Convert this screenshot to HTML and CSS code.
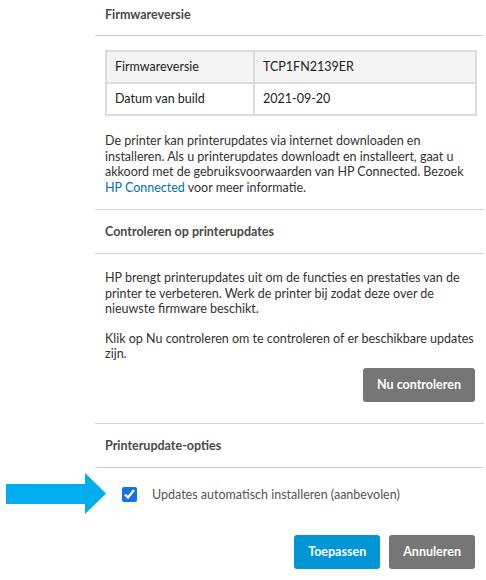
FILE: index.html
```html
<!DOCTYPE html>
<html lang="nl">
<head>
  <meta charset="UTF-8" />
  <meta name="viewport" content="width=device-width, initial-scale=1.0"/>
  <title>Printerupdates</title>
  <link rel="stylesheet" href="styles.css">
</head>
<body>

  <div class="panel">

    <section class="section">
      <h2 class="section-title first">Firmwareversie</h2>
      <div class="section-body">
        <table class="info-table">
          <tr class="shaded">
            <td class="label-cell">Firmwareversie</td>
            <td>TCP1FN2139ER</td>
          </tr>
          <tr>
            <td class="label-cell">Datum van build</td>
            <td>2021-09-20</td>
          </tr>
        </table>
        <p class="text intro">
          De printer kan printerupdates via internet downloaden en installeren. Als u printerupdates downloadt en installeert, gaat u akkoord met de gebruiksvoorwaarden van HP Connected. Bezoek
          <a href="#" class="link">HP Connected</a> voor meer informatie.
        </p>
      </div>
    </section>

    <section class="section">
      <h2 class="section-title">Controleren op printerupdates</h2>
      <div class="section-body">
        <p class="text first-text">
          HP brengt printerupdates uit om de functies en prestaties van de printer te verbeteren. Werk de printer bij zodat deze over de nieuwste firmware beschikt.
        </p>
        <p class="text next-text">
          Klik op Nu controleren om te controleren of er beschikbare updates zijn.
        </p>
        <div class="actions check-actions">
          <button type="button" class="btn btn-gray">Nu controleren</button>
        </div>
      </div>
    </section>

    <section class="section">
      <h2 class="section-title">Printerupdate-opties</h2>
      <div class="section-body">
        <label class="check-row">
          <svg class="pointer" width="100" height="41" viewBox="0 0 100 41">
            <polygon points="0,11 79,11 79,0 100,20.5 79,41 79,31 0,31" fill="#00aeef"/>
          </svg>
          <input type="checkbox" class="check" checked />
          <span>Updates automatisch installeren (aanbevolen)</span>
        </label>
        <div class="actions final-actions">
          <button type="button" class="btn btn-blue">Toepassen</button>
          <button type="button" class="btn btn-gray">Annuleren</button>
        </div>
      </div>
    </section>

  </div>

</body>
</html>
```

FILE: styles.css
```css
body {
  margin: 0;
  background: #fff;
  font-family: Lato, "Noto Sans", sans-serif;
  font-size: 12.5px;
  color: #333;
}
.panel {
  margin-left: 95px;
  width: 389px;
}
.section + .section {
  border-top: 1px solid #d4d4d4;
}
.section-title {
  margin: 0;
  padding: 13px 10px 12px;
  font-size: 12.5px;
  line-height: 18px;
  font-weight: 700;
  color: #4a4a4a;
  border-bottom: 1px solid #d4d4d4;
}
.section-title.first {
  padding-top: 6px;
  padding-bottom: 11px;
}
.section-body {
  padding: 0 9px 0 10px;
}
.info-table {
  margin-top: 14px;
  width: 372px;
  border-collapse: collapse;
  border: 2px solid #dcdcdc;
}
.info-table td {
  border: 2px solid #dcdcdc;
  padding: 7px 8px;
  line-height: 16px;
  color: #222;
}
.info-table .label-cell {
  width: 130px;
}
.info-table .shaded {
  background: #f4f4f4;
}
.text {
  margin: 0;
  line-height: 15.5px;
}
.intro {
  margin-top: 17px;
  padding-bottom: 14px;
}
.first-text {
  margin-top: 16px;
}
.next-text {
  margin-top: 14px;
}
.link {
  color: #0073ab;
  text-decoration: none;
}
.actions {
  display: flex;
  justify-content: flex-end;
  gap: 9px;
}
.check-actions {
  margin-top: 6px;
  padding-bottom: 21px;
}
.final-actions {
  margin-top: 32px;
  padding-bottom: 11px;
}
.btn {
  height: 34px;
  padding: 0 14px;
  border: none;
  border-radius: 3px;
  font-family: inherit;
  font-size: 12.5px;
  font-weight: 700;
  color: #fff;
}
.btn-gray {
  background: #767676;
}
.btn-blue {
  background: #0096d6;
}
.check-row {
  position: relative;
  display: flex;
  align-items: center;
  gap: 15px;
  margin-top: 19px;
  padding-left: 17px;
  height: 16px;
  color: #555;
}
.check {
  width: 15px;
  height: 15px;
  margin: 0;
  accent-color: #1670e8;
}
.pointer {
  position: absolute;
  left: -99px;
  top: -14px;
}
```
